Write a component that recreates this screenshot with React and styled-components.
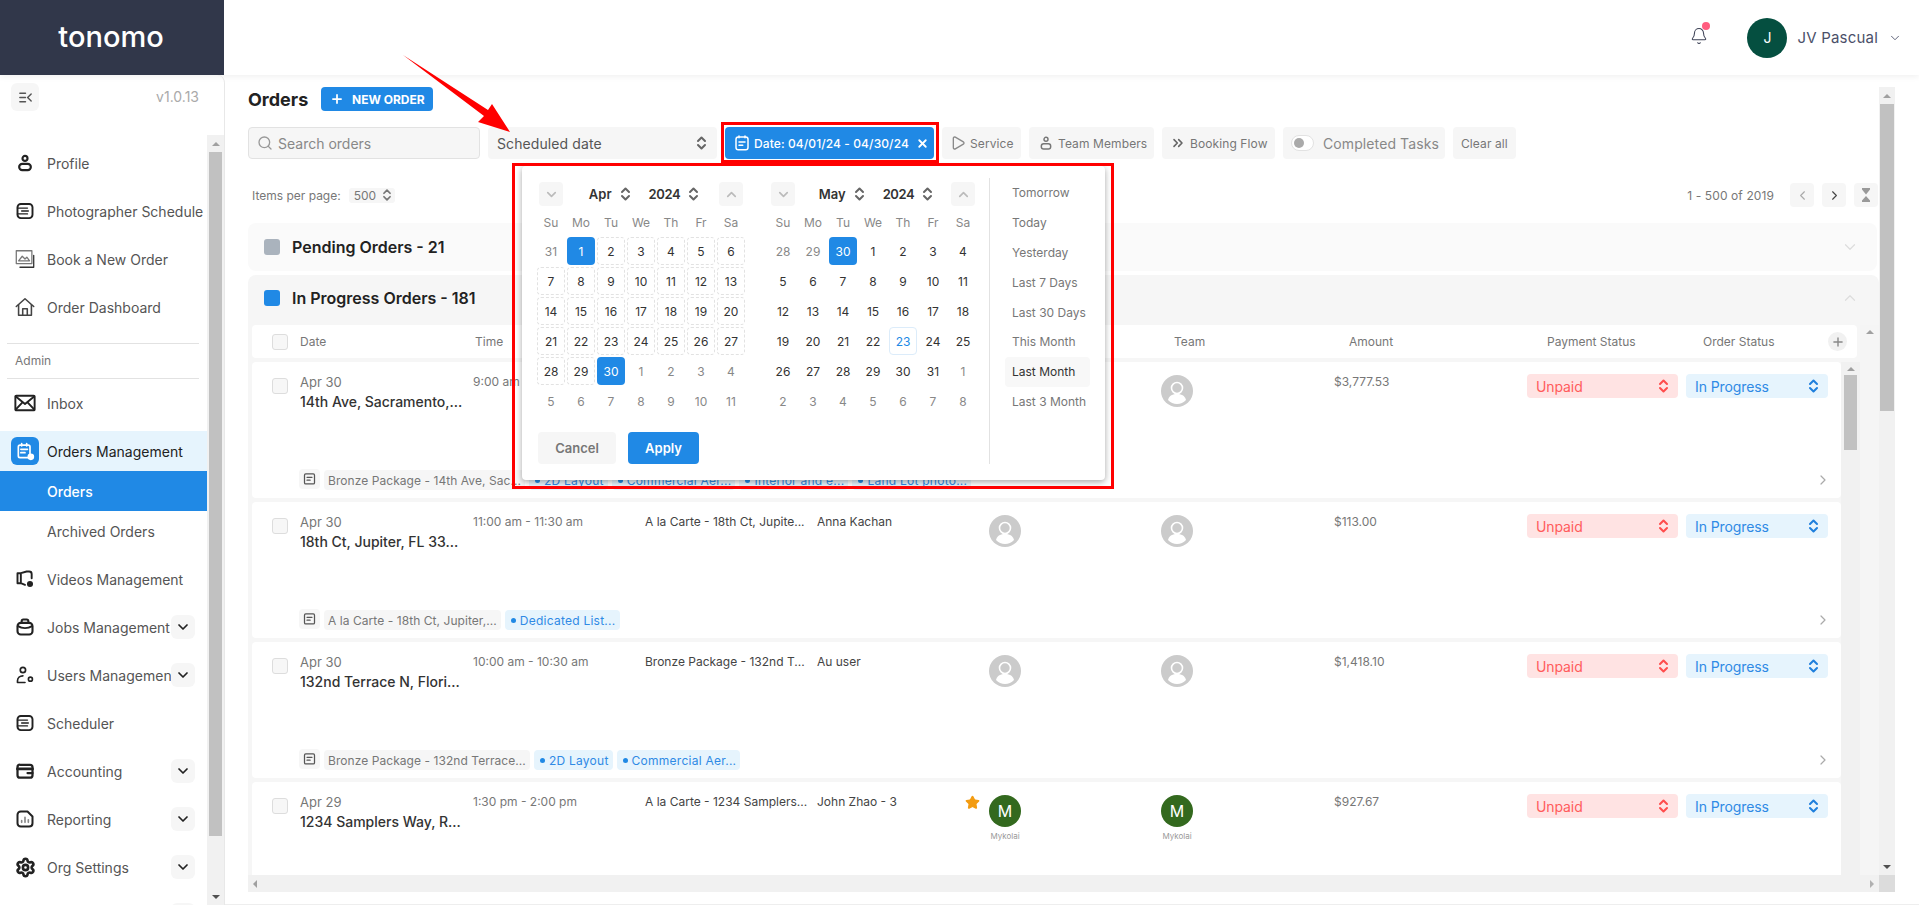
import React from 'react';
import styled, { createGlobalStyle } from 'styled-components';
import { Bell, ChevronDown, ChevronUp, ChevronLeft, ChevronRight, ChevronsRight, Plus, Search, Play, X, Settings, Star } from 'lucide-react';

const Global = createGlobalStyle`
  html, body { margin: 0; padding: 0; background: #fff; overflow: hidden; }
  body { font-family: Inter, "Liberation Sans", sans-serif; color: #333; }
  * { box-sizing: border-box; }
`;

const BLUE = '#2089e5';

const Page = styled.div`position: relative; width: 1919px; height: 905px; display: flex; flex-direction: column; overflow: hidden;`;
const Header = styled.header`height: 75px; flex: none; display: flex; align-items: center; background: #fff; box-shadow: 0 2px 6px rgba(0,0,0,.06); position: relative; z-index: 1;`;
const LogoBox = styled.div`width: 224px; height: 75px; background: #31374a; display: flex; align-items: center; justify-content: center; padding-right: 2px;`;
const Logo = styled.span`color: #fff; font-size: 29px; font-weight: 500; letter-spacing: 0; line-height: 1; margin-top: -2px;`;
const HeaderRight = styled.div`margin-left: auto; display: flex; align-items: center; padding-right: 17px; color: #4b5069;`;
const BellWrap = styled.div`position: relative; width: 18px; height: 18px; margin-right: 39px; color: #3d4256; margin-top: -4px;`;
const BellDot = styled.span`position: absolute; top: -5px; right: -2px; width: 8px; height: 8px; border-radius: 50%; background: #ff5c7f;`;
const UserAvatar = styled.div`width: 40px; height: 40px; border-radius: 50%; background: #054f40; color: #fff; display: flex; align-items: center; justify-content: center; font-size: 14px; margin-right: 10px;`;
const UserName = styled.span`font-size: 15px; margin-right: 10px; letter-spacing: .2px;`;

const Body = styled.div`flex: 1; min-height: 0; display: flex;`;
const Sidebar = styled.aside`width: 225px; flex: none; display: flex; flex-direction: column; border-right: 1px solid #e8e8e8; border-top-right-radius: 8px; background: #fff;`;
const SideTop = styled.div`height: 60px; flex: none; display: flex; align-items: flex-start; justify-content: space-between; padding: 8px 25px 0 11px;`;
const CollapseBtn = styled.div`width: 28px; height: 28px; border-radius: 6px; background: #f6f6f6; display: flex; align-items: center; justify-content: center;`;
const Version = styled.span`font-size: 14px; color: #aaa; line-height: 28px;`;
const SideScroll = styled.div`flex: 1; min-height: 0; display: flex;`;
const Nav = styled.nav`width: 207px; flex: none; padding-top: 4px; overflow: hidden;`;
const NavItem = styled.div`height: 48px; display: flex; align-items: center; padding: 0 12px 0 11px; gap: 8px; font-size: 14px; color: #555;`;
const IconSlot = styled.div`width: 28px; height: 28px; flex: none; display: flex; align-items: center; justify-content: center;`;
const NavLabel = styled.span`flex: 1; min-width: 0; white-space: nowrap; overflow: ${p => (p.$clip ? 'hidden' : 'visible')};`;
const Toggle = styled.div`width: 24px; height: 24px; flex: none; border-radius: 6px; background: #f6f6f6; display: flex; align-items: center; justify-content: center; color: #222; margin-left: -8px;`;
const Rule = styled.div`height: 1px; background: #e2e2e2; margin: ${p => p.$m}; width: 192px;`;
const AdminLabel = styled.div`font-size: 12px; color: #777; padding-left: 15px; line-height: 16px; height: 16px; margin: 9px 0 9px;`;
const Group = styled.div`margin: 4px 0;`;
const GroupHead = styled.div`height: 40px; background: #e6f4fd; display: flex; align-items: center; gap: 8px; padding-left: 11px; font-size: 14px; color: #222;`;
const BlueSquare = styled.div`width: 28px; height: 28px; background: ${BLUE}; border-radius: 6px; display: flex; align-items: center; justify-content: center;`;
const SubItem = styled.div`height: 40px; display: flex; align-items: center; padding-left: 47px; font-size: 14px; color: ${p => (p.$active ? '#fff' : '#555')}; background: ${p => (p.$active ? BLUE : 'transparent')}; font-weight: ${p => (p.$active ? 500 : 400)};`;

const VBar = styled.div`width: ${p => p.$w}px; flex: none; background: ${p => p.$bg || '#f1f1f1'}; display: flex; flex-direction: column; align-items: center;`;
const ArrowZone = styled.div`height: ${p => p.$h || 17}px; flex: none; display: flex; align-items: center; justify-content: center; width: 100%; margin-top: ${p => (p.$end ? 'auto' : 0)};`;
const Tri = styled.span`width: 0; height: 0; border-left: 4px solid transparent; border-right: 4px solid transparent; ${p => (p.$down ? 'border-top: 4px solid #505050;' : 'border-bottom: 4px solid #a0a0a0;')}`;
const Thumb = styled.div`width: ${p => p.$w}px; height: ${p => p.$h}px; flex: none; background: #c1c1c1;`;

const Main = styled.main`flex: 1; min-width: 0; display: grid; grid-template-columns: 1631px 16px; grid-template-rows: 788px 17px; padding: 12px 24px 13px 23px; border-bottom: 1px solid #eee;`;
const Content = styled.div`min-height: 0; overflow: hidden; display: flex; flex-direction: column;`;
const HBar = styled.div`background: #f1f1f1; display: flex; align-items: center; justify-content: space-between; padding: 0 5px;`;
const HTri = styled.span`width: 0; height: 0; border-top: 4px solid transparent; border-bottom: 4px solid transparent; ${p => (p.$right ? 'border-left: 4px solid #b0b0b0;' : 'border-right: 4px solid #a0a0a0;')}`;
const Corner = styled.div`background: #dcdcdc;`;

const TitleRow = styled.div`height: 24px; flex: none; display: flex; align-items: center; gap: 13px;`;
const Title = styled.h1`margin: 0; font-size: 18px; font-weight: 700; color: #222; width: 60px;`;
const NewBtn = styled.button`width: 112px; height: 24px; border: 0; border-radius: 4px; background: ${BLUE}; color: #fff; font: 700 12px Inter, sans-serif; display: flex; align-items: center; padding: 0 0 0 9px; gap: 8px;`;

const Toolbar = styled.div`height: 32px; flex: none; margin-top: 16px; display: flex; gap: 8px;`;
const SearchBox = styled.div`width: 232px; border: 1px solid #e2e2e2; border-radius: 4px; background: #f6f6f6; display: flex; align-items: center; padding-left: 8px; gap: 5px; font-size: 14px; color: #888;`;
const SelectBox = styled.div`width: 229px; border-radius: 4px; background: #f6f6f6; display: flex; align-items: center; justify-content: space-between; padding: 0 10px 0 9px; font-size: 14px; color: #555; letter-spacing: .1px;`;
const DateChip = styled.div`width: 209px; border-radius: 4px; background: ${BLUE}; color: #fff; font-size: 12px; font-weight: 500; display: flex; align-items: center; padding-left: 8px; gap: 3px; letter-spacing: .1px; white-space: nowrap;`;
const Chip = styled.div`width: ${p => p.$w}px; flex: none; border-radius: 4px; background: #f6f6f6; color: #777; font-size: 12px; display: flex; align-items: center; gap: 4px; padding-left: ${p => p.$pl || 8}px; white-space: nowrap; letter-spacing: .1px;`;
const Switch = styled.span`width: 23px; height: 16px; border-radius: 8px; background: #fff; border: 1px solid #e2e2e2; display: flex; align-items: center; padding-left: 2px; margin-right: 5px;`;
const Knob = styled.span`width: 10px; height: 10px; border-radius: 50%; background: #aaa;`;
const ChipText = styled.span`font-size: 14px; color: #888;`;

const PagerRow = styled.div`height: 24px; flex: none; margin-top: 24px; display: flex; align-items: center; padding-left: 4px; font-size: 12px; color: #777; margin-right: 1px;`;
const PerSelect = styled.div`width: 46px; height: 15px; margin-left: 8px; border-radius: 3px; background: #f6f6f6; display: flex; align-items: center; justify-content: space-between; padding: 0 3px 0 5px;`;
const Range = styled.span`margin-left: auto; margin-right: 16px; letter-spacing: .1px;`;
const PageBtn = styled.div`width: 24px; height: 24px; border-radius: 4px; background: #f6f6f6; margin-left: ${p => p.$ml ?? 8}px; display: flex; align-items: center; justify-content: center; color: ${p => p.$c};`;

const Accordion = styled.section`flex: none; height: 48px; margin-top: 16px; margin-right: 2px; border-radius: 8px; background: #fafafa; display: flex; align-items: center; padding: 0 18px 0 16px; gap: 12px; font-size: 16px; font-weight: 600; color: #222;`;
const Swatch = styled.span`width: 16px; height: 16px; border-radius: 3px; background: ${p => p.$c};`;
const AccChevron = styled.span`margin-left: auto; color: #ddd; display: flex;`;
const OpenAcc = styled.section`flex: 1; min-height: 0; margin-top: 4px; border-radius: 8px 8px 0 0; background: #f6f6f6; display: flex; flex-direction: column;`;
const OpenHead = styled.div`height: 46px; flex: none; margin-bottom: 4px; display: flex; align-items: center; padding: 0 20px 0 16px; gap: 12px; font-size: 16px; font-weight: 600; color: #222;`;
const TableArea = styled.div`flex: 1; min-height: 0; display: flex;`;
const TableCol = styled.div`width: 1608px; margin-left: 4px; flex: none; display: flex; flex-direction: column; min-height: 0;`;

const cols = '48px 173px 172px 172px 172px 172px 173px 193px 159px 142px 1fr';
const HeadRow = styled.div`height: 33px; flex: none; margin-right: 3px; background: #fff; border-radius: 4px; display: grid; grid-template-columns: ${cols}; align-items: center; font-size: 12px; color: #777;`;
const Box = styled.span`width: 16px; height: 16px; border: 1px solid #ddd; border-radius: 3px; background: #f7f7f7; display: block; margin-left: 20px;`;
const HeadCell = styled.span`padding-left: ${p => p.$pl || 0}px; grid-column: ${p => p.$c};`;
const AddCircle = styled.span`width: 19px; height: 19px; border-radius: 50%; background: #f1f1f1; color: #888; display: flex; align-items: center; justify-content: center; grid-column: 11; margin-left: 0;`;
const RowsWrap = styled.div`flex: 1; min-height: 0; margin-top: 4px; display: flex;`;
const Rows = styled.div`width: 1589px; flex: none; overflow: hidden; display: flex; flex-direction: column; gap: 4px;`;
const Row = styled.article`height: 136px; flex: none; background: #fff; border-radius: 4px; display: flex; flex-direction: column; padding-bottom: 8px;`;
const RowMain = styled.div`flex: 1; display: grid; grid-template-columns: ${cols}; padding-top: 12px; align-items: start;`;
const RowBox = styled(Box)`margin-top: 4px;`;
const DateCell = styled.div`display: flex; flex-direction: column;`;
const SmallDate = styled.span`font-size: 13px; color: #777; line-height: 16px;`;
const Address = styled.span`font-size: 14px; font-weight: 500; color: #333; line-height: 18px; margin-top: 3px; white-space: nowrap;`;
const Cell = styled.span`font-size: 12px; line-height: 16px; color: ${p => p.$c || '#777'}; white-space: nowrap;`;
const PersonCell = styled.div`display: flex; flex-direction: column; align-items: flex-start; position: relative; width: 32px; margin-top: 1px;`;
const Initial = styled.div`width: 32px; height: 32px; border-radius: 50%; background: #33691e; color: #fff; font-size: 16px; display: flex; align-items: center; justify-content: center;`;
const PersonName = styled.span`font-size: 8px; color: #999; margin-top: 4px; align-self: center; line-height: 10px;`;
const StarMark = styled.span`position: absolute; left: -24px; top: 0; color: #f39c12; display: flex;`;
const Pill = styled.div`width: ${p => p.$w}px; height: 24px; border-radius: 4px; background: ${p => p.$bg}; color: ${p => p.$c}; font-size: 14px; display: flex; align-items: center; justify-content: space-between; padding: 0 9px; letter-spacing: -.1px;`;
const TagRow = styled.div`height: 20px; flex: none; display: flex; align-items: center; padding: 0 10px 0 47px; gap: 4px;`;
const NoteBtn = styled.span`width: 21px; height: 20px; border-radius: 4px; background: #f6f6f6; display: flex; align-items: center; justify-content: center; margin-top: -2px;`;
const Tag = styled.span`height: 20px; border-radius: 4px; padding: 0 ${p => (p.$blue ? '4px 0 6px' : '4px')}; background: ${p => (p.$blue ? '#e6f4fd' : '#f6f6f6')}; color: ${p => (p.$blue ? '#2f8ae5' : '#777')}; font-size: 12px; letter-spacing: ${p => (p.$blue ? '.25px' : '.06px')}; display: flex; align-items: center; gap: 4px; white-space: nowrap;`;
const TagDot = styled.i`width: 5px; height: 5px; border-radius: 50%; background: ${BLUE};`;
const RowArrow = styled.span`margin-left: auto; color: #aaa; display: flex;`;

const Popup = styled.div`position: absolute; left: 522px; top: 166px; width: 583px; height: 314px; z-index: 5; background: #fff; border-radius: 4px; box-shadow: 0 2px 6px rgba(0,0,0,.35); display: flex; padding: 16px 0 16px 14px;`;
const CalSide = styled.div`width: 442px; flex: none; display: flex; flex-direction: column;`;
const Cals = styled.div`display: flex; gap: 22px;`;
const Cal = styled.div`width: 210px;`;
const CalNav = styled.div`height: 24px; display: flex; align-items: center; justify-content: space-between; padding: 0 3px;`;
const NavBtn = styled.div`width: 24px; height: 24px; border-radius: 4px; background: #f6f6f6; display: flex; align-items: center; justify-content: center; color: #bbb;`;
const MonthYear = styled.div`display: flex; align-items: center; font-size: 13px; font-weight: 600; color: #333; gap: 8px; margin-left: 6px;`;
const Year = styled.span`margin-left: 10px; letter-spacing: -.4px;`;
const Week = styled.div`margin-top: 2px; height: 28px; display: grid; grid-template-columns: repeat(7, 30px); align-items: center; justify-items: center; font-size: 12px; color: #888;`;
const Days = styled.div`display: grid; grid-template-columns: repeat(7, 30px); grid-auto-rows: 30px; justify-items: center; align-items: center;`;
const Day = styled.div`width: 28px; height: 28px; border-radius: 4px; display: flex; align-items: center; justify-content: center; font-size: 12px;
  color: ${p => (p.$sel ? '#fff' : p.$today ? BLUE : p.$muted ? '#888' : '#333')};
  background: ${p => (p.$sel ? BLUE : 'transparent')};
  border: ${p => (p.$range ? '1px dashed #e2e2e2' : p.$today ? '1px solid #dcecfa' : '0')};`;
const Actions = styled.div`margin-top: auto; display: flex; gap: 12px; padding-left: 2px;`;
const CancelBtn = styled.button`width: 78px; height: 32px; border: 0; border-radius: 4px; background: #f6f6f6; color: #777; font: 600 13px Inter, sans-serif;`;
const ApplyBtn = styled.button`width: 71px; height: 32px; border: 0; border-radius: 4px; background: ${BLUE}; color: #fff; font: 600 13px Inter, sans-serif;`;
const Presets = styled.div`width: 116px; margin-left: 11px; margin-top: -4px; border-left: 1px solid #e2e2e2; padding-left: 15px;`;
const Preset = styled.div`height: 29.8px; width: 85px; border-radius: 4px; padding-left: 7px; display: flex; align-items: center; font-size: 12px; color: ${p => (p.$on ? '#333' : '#777')}; background: ${p => (p.$on ? '#f8f8f8' : 'transparent')}; white-space: nowrap;`;

const RedBox = styled.div`position: absolute; left: ${p => p.$x}px; top: ${p => p.$y}px; width: ${p => p.$w}px; height: ${p => p.$h}px; border: 3px solid #f00; z-index: ${p => p.$z}; pointer-events: none;`;
const ArrowSvg = styled.svg`position: absolute; left: 400px; top: 50px; z-index: 7;`;

const Ico = ({ size = 20, sw = 2, c = '#222', children }) => (
  <svg width={size} height={size} viewBox="0 0 24 24" fill="none" stroke={c} strokeWidth={sw} strokeLinecap="round" strokeLinejoin="round">{children}</svg>
);
const UpDown = ({ c = '#666', w = 11, h = 16, sw = 2 }) => (
  <svg width={w} height={h} viewBox="0 0 11 16" fill="none" stroke={c} strokeWidth={sw} strokeLinecap="round" strokeLinejoin="round"><path d="M2 6l3.5-3.5L9 6" /><path d="M2 10l3.5 3.5L9 10" /></svg>
);
const Sched = ({ c = '#222', size = 20, sw = 2.3 }) => (
  <Ico c={c} size={size} sw={sw}><rect x="3" y="3.500" width="18" height="17" rx="4" /><path d="M3 8.500h12M8 12h8M3 15.500h12" strokeWidth={sw * 0.7} /></Ico>
);
const navIcons = {
  profile: <Ico sw={2.6}><circle cx="12" cy="6.5" r="3" /><rect x="5" y="13" width="14" height="7.5" rx="3.7" /></Ico>,
  book: <Ico c="#777" sw={1.4} size={22}><rect x="2.5" y="3" width="17" height="14" /><path d="M5 14l4-5 3 3 2-2 3 4z" /><path d="M21.5 8v13h-15" stroke="#333" /></Ico>,
  home: <Ico c="#444" sw={1.7} size={22}><path d="M2.5 11.5L12 3l9.5 8.5" /><path d="M5 9.5V21h14V9.5" /><path d="M9.5 21v-7h5v7" /></Ico>,
  inbox: <Ico size={22} sw={2.1}><rect x="1.5" y="4" width="21" height="16" rx="1" /><path d="M2 5l10 8 10-8M2 19l7.5-8M22 19l-7.5-8" /></Ico>,
  videos: <Ico sw={2.3}><path d="M3 5h4v12H3zM7 5l7-2h3c2 0 3 1 3 3v5M7 17l5 2" /><circle cx="18" cy="18" r="2.5" fill="#222" /></Ico>,
  jobs: <Ico sw={2.5}><path d="M8 7V5c0-1 1-2 2-2h4c1 0 2 1 2 2v2" /><rect x="3" y="7" width="18" height="14" rx="4" /><path d="M3.5 11c5 3 12 3 17 0" /></Ico>,
  users: <Ico sw={2}><circle cx="9.5" cy="6" r="3.2" /><path d="M3 21v-2c0-3.5 3-6 6.5-6M3 21h9" /><circle cx="18.5" cy="17" r="2.4" /></Ico>,
  account: <Ico sw={2.7}><rect x="3" y="4.5" width="18" height="15.5" rx="3" /><path d="M3 9.5h18" strokeWidth={3.4} /><path d="M15 14.5h6" /></Ico>,
  report: <Ico sw={2.4}><path d="M7 3h8l6 6v8c0 2.5-1.5 4-4 4H7c-2.5 0-4-1.5-4-4V7c0-2.5 1.5-4 4-4z" /><path d="M8 16v-2M12 16v-6M16 16v-3" stroke="#888" strokeWidth={2} /></Ico>,
  org: <Settings size={21} strokeWidth={3} color="#222" />,
};
const items1 = [
  ['Profile', navIcons.profile], ['Photographer Schedule', <Sched />], ['Book a New Order', navIcons.book], ['Order Dashboard', navIcons.home],
];
const items2 = [
  ['Videos Management', navIcons.videos], ['Jobs Management', navIcons.jobs, true], ['Users Management', navIcons.users, true],
  ['Scheduler', <Sched />], ['Accounting', navIcons.account, true], ['Reporting', navIcons.report, true], ['Org Settings', navIcons.org, true], ['', null, true],
];
const Item = ({ label, icon, more }) => (
  <NavItem>
    <IconSlot>{icon}</IconSlot>
    <NavLabel $clip={more}>{label}</NavLabel>
    {more && <Toggle><ChevronDown size={16} strokeWidth={2.6} /></Toggle>}
  </NavItem>
);

const range = (a, b) => Array.from({ length: b - a + 1 }, (_, i) => a + i);
const april = [
  { d: 31, muted: true }, ...range(1, 30).map(d => ({ d, sel: d === 1 || d === 30, range: d > 1 && d < 30 })), ...range(1, 11).map(d => ({ d, muted: true })),
];
const may = [
  { d: 28, muted: true }, { d: 29, muted: true }, { d: 30, sel: true }, ...range(1, 31).map(d => ({ d, today: d === 23 })), ...range(1, 8).map(d => ({ d, muted: true })),
];
const Calendar = ({ month, days }) => (
  <Cal>
    <CalNav>
      <NavBtn><ChevronDown size={15} strokeWidth={2.6} /></NavBtn>
      <MonthYear><span>{month}</span><UpDown /><Year>2024</Year><UpDown /></MonthYear>
      <NavBtn><ChevronUp size={15} strokeWidth={2.6} /></NavBtn>
    </CalNav>
    <Week>{['Su', 'Mo', 'Tu', 'We', 'Th', 'Fr', 'Sa'].map(w => <span key={w}>{w}</span>)}</Week>
    <Days>{days.map((x, i) => <Day key={i} $sel={x.sel} $range={x.range} $muted={x.muted} $today={x.today}>{x.d}</Day>)}</Days>
  </Cal>
);

const Anon = () => (
  <svg width="32" height="32" viewBox="0 0 32 32"><circle cx="16" cy="16" r="16" fill="#cbcbcb" /><circle cx="16" cy="13" r="5.5" fill="#cbcbcb" stroke="#fff" strokeWidth="1.6" /><path d="M7 25c1-4.500 5-6 9-6s8 1.500 9 6c-2.500 2.500-5.500 4-9 4s-6.500-1.500-9-4z" fill="#fff" /></svg>
);
const Person = () => (
  <PersonCell><Anon /></PersonCell>
);
const Note = () => (
  <NoteBtn><Ico size={15} c="#555" sw={2}><path d="M4 5c0-1 .8-2 2-2h12c1.200 0 2 1 2 2v12c0 1-.8 2-2 2H6c-1 0-2-1-2-2z" /><path d="M8 8.500h8M8 13h5" /></Ico></NoteBtn>
);
const orders = [
  { date: 'Apr 30', addr: '14th Ave, Sacramento,...', time: '9:00 am - 9:30 am', svc: '', who: '', amt: '$3,777.53', tag: 'Bronze Package - 14th Ave, Sac...', blue: ['2D Layout', 'Commercial Aer...', 'Interior and e...', 'Land Lot photo...'] },
  { date: 'Apr 30', addr: '18th Ct, Jupiter, FL 33...', time: '11:00 am - 11:30 am', svc: 'A la Carte - 18th Ct, Jupite...', who: 'Anna Kachan', amt: '$113.00', tag: 'A la Carte - 18th Ct, Jupiter,...', blue: ['Dedicated List...'] },
  { date: 'Apr 30', addr: '132nd Terrace N, Flori...', time: '10:00 am - 10:30 am', svc: 'Bronze Package - 132nd T...', who: 'Au user', amt: '$1,418.10', tag: 'Bronze Package - 132nd Terrace...', blue: ['2D Layout', 'Commercial Aer...'] },
  { date: 'Apr 29', addr: '1234 Samplers Way, R...', time: '1:30 pm - 2:00 pm', svc: 'A la Carte - 1234 Samplers...', who: 'John Zhao - 3', amt: '$927.67', tag: '', blue: [], m: true },
];
const presets = ['Tomorrow', 'Today', 'Yesterday', 'Last 7 Days', 'Last 30 Days', 'This Month', 'Last Month', 'Last 3 Month'];

export default function App() {
  return (
    <Page>
      <Global />
      <Header>
        <LogoBox><Logo>tonomo</Logo></LogoBox>
        <HeaderRight>
          <BellWrap><Bell size={18} strokeWidth={1.4} /><BellDot /></BellWrap>
          <UserAvatar>J</UserAvatar>
          <UserName>JV Pascual</UserName>
          <ChevronDown size={14} strokeWidth={1.5} />
        </HeaderRight>
      </Header>
      <Body>
        <Sidebar>
          <SideTop>
            <CollapseBtn><Ico size={17} c="#555" sw={2}><path d="M4 6h8M4 12h8M4 18h8M20 7l-5 5 5 5" /></Ico></CollapseBtn>
            <Version>v1.0.13</Version>
          </SideTop>
          <SideScroll>
            <Nav>
              {items1.map(([l, i]) => <Item key={l} label={l} icon={i} />)}
              <Rule $m="12px 0 0 7px" />
              <AdminLabel>Admin</AdminLabel>
              <Rule $m="0 0 0 7px" />
              <Item label="Inbox" icon={navIcons.inbox} />
              <Group>
                <GroupHead>
                  <BlueSquare>
                    <Ico size={20} c="#fff" sw={2}><rect x="4" y="5" width="14" height="15" rx="2" /><path d="M8 3v3M14 3v3M7 10h8M7 14h5" /><circle cx="19" cy="19" r="3" fill="#fff" /></Ico>
                  </BlueSquare>
                  Orders Management
                </GroupHead>
                <SubItem $active>Orders</SubItem>
                <SubItem>Archived Orders</SubItem>
              </Group>
              {items2.map(([l, i, m], idx) => <Item key={idx} label={l} icon={i} more={m} />)}
            </Nav>
            <VBar $w={17}>
              <ArrowZone><Tri /></ArrowZone>
              <Thumb $w={13} $h={684} />
              <ArrowZone $end><Tri $down /></ArrowZone>
            </VBar>
          </SideScroll>
        </Sidebar>
        <Main>
          <Content>
            <TitleRow>
              <Title>Orders</Title>
              <NewBtn><Plus size={14} strokeWidth={3} />NEW ORDER</NewBtn>
            </TitleRow>
            <Toolbar>
              <SearchBox><Search size={16} strokeWidth={2} color="#999" />Search orders</SearchBox>
              <SelectBox>Scheduled date<UpDown c="#666" /></SelectBox>
              <DateChip>
                <Ico size={18} c="#fff" sw={2}><rect x="4" y="4" width="16" height="17" rx="3" /><path d="M8 2.500V5M16 2.500V5M8 10.500h8M8 15h5" /></Ico>
                Date: 04/01/24 - 04/30/24
                <X size={13} strokeWidth={3.4} style={{ marginLeft: 4 }} />
              </DateChip>
              <Chip $w={79}><Play size={16} strokeWidth={2} color="#8a8a8a" />Service</Chip>
              <Chip $w={125} $pl={9}><Ico size={16} c="#777" sw={2.2}><circle cx="12" cy="6.500" r="3" /><rect x="5" y="13" width="14" height="8" rx="3.500" /></Ico>Team Members</Chip>
              <Chip $w={113}><ChevronsRight size={16} strokeWidth={2.4} color="#666" />Booking Flow</Chip>
              <Chip $w={162}><Switch><Knob /></Switch><ChipText>Completed Tasks</ChipText></Chip>
              <Chip $w={63}>Clear all</Chip>
            </Toolbar>
            <PagerRow>
              Items per page:
              <PerSelect>500<UpDown c="#777" w={10} h={14} /></PerSelect>
              <Range>1 - 500 of 2019</Range>
              <PageBtn $ml={0} $c="#aaa"><ChevronLeft size={15} strokeWidth={1.8} /></PageBtn>
              <PageBtn $c="#444"><ChevronRight size={15} strokeWidth={1.8} /></PageBtn>
              <PageBtn $c="#999"><svg width="10" height="14" viewBox="0 0 10 14" fill="currentColor"><path d="M1 0h8v1.500L5 6.500 1 1.500zM5 8l4 4.500V14H1v-1.500z" /></svg></PageBtn>
            </PagerRow>
            <Accordion>
              <Swatch $c="#aab3bd" />Pending Orders - 21
              <AccChevron><ChevronDown size={18} strokeWidth={1.6} /></AccChevron>
            </Accordion>
            <OpenAcc>
              <OpenHead>
                <Swatch $c={BLUE} />In Progress Orders - 181
                <AccChevron><ChevronUp size={18} strokeWidth={1.6} /></AccChevron>
              </OpenHead>
              <TableArea>
                <TableCol>
                  <HeadRow>
                    <Box />
                    <HeadCell $c={2}>Date</HeadCell>
                    <HeadCell $c={3} $pl={2}>Time</HeadCell>
                    <HeadCell $c={7} $pl={13}>Team</HeadCell>
                    <HeadCell $c={8} $pl={15}>Amount</HeadCell>
                    <HeadCell $c={9} $pl={20}>Payment Status</HeadCell>
                    <HeadCell $c={10} $pl={17}>Order Status</HeadCell>
                    <AddCircle><Plus size={14} strokeWidth={2.4} /></AddCircle>
                  </HeadRow>
                  <RowsWrap>
                    <Rows>
                      {orders.map((o, i) => (
                        <Row key={i}>
                          <RowMain>
                            <RowBox />
                            <DateCell>
                              <SmallDate>{o.date}</SmallDate>
                              <Address>{o.addr}</Address>
                            </DateCell>
                            <Cell>{o.time}</Cell>
                            <Cell $c="#444">{o.svc}</Cell>
                            <Cell $c="#444">{o.who}</Cell>
                            {o.m ? (
                              <PersonCell><StarMark><Star size={15} fill="#f39c12" color="#f39c12" /></StarMark><Initial>M</Initial><PersonName>Mykolai</PersonName></PersonCell>
                            ) : <Person />}
                            {o.m ? (
                              <PersonCell><Initial>M</Initial><PersonName>Mykolai</PersonName></PersonCell>
                            ) : <Person />}
                            <Cell>{o.amt}</Cell>
                            <Pill $w={151} $bg="#ffe3e3" $c="#ff5c5c">Unpaid<UpDown c="#ff4d4d" /></Pill>
                            <Pill $w={142} $bg="#e6f4fd" $c="#2f8ae5">In Progress<UpDown c="#1f7fdc" /></Pill>
                          </RowMain>
                          {o.tag && (
                            <TagRow>
                              <Note />
                              <Tag>{o.tag}</Tag>
                              {o.blue.map(b => <Tag key={b} $blue><TagDot />{b}</Tag>)}
                              <RowArrow><ChevronRight size={16} strokeWidth={1.8} /></RowArrow>
                            </TagRow>
                          )}
                        </Row>
                      ))}
                    </Rows>
                    <VBar $w={19}>
                      <ArrowZone $h={13}><Tri /></ArrowZone>
                      <Thumb $w={13} $h={75} />
                    </VBar>
                  </RowsWrap>
                </TableCol>
                <VBar $w={19} $bg="#f5f5f5"><ArrowZone $h={14}><Tri /></ArrowZone></VBar>
              </TableArea>
            </OpenAcc>
          </Content>
          <VBar $w={16}>
            <ArrowZone><Tri /></ArrowZone>
            <Thumb $w={14} $h={307} />
            <ArrowZone $end><Tri $down /></ArrowZone>
          </VBar>
          <HBar><HTri /><HTri $right /></HBar>
          <Corner />
        </Main>
      </Body>

      <Popup>
        <CalSide>
          <Cals>
            <Calendar month="Apr" days={april} />
            <Calendar month="May" days={may} />
          </Cals>
          <Actions><CancelBtn>Cancel</CancelBtn><ApplyBtn>Apply</ApplyBtn></Actions>
        </CalSide>
        <Presets>
          {presets.map(p => <Preset key={p} $on={p === 'Last Month'}>{p}</Preset>)}
        </Presets>
      </Popup>
      <RedBox $x={721} $y={122} $w={218} $h={41} $z={6} />
      <RedBox $x={512} $y={163} $w={602} $h={326} $z={6} />
      <ArrowSvg width="120" height="90" viewBox="400 50 120 90"><polygon points="403,55 488,110 492,104 510,132 478,122 484,116" fill="#f00" /></ArrowSvg>
    </Page>
  );
}
